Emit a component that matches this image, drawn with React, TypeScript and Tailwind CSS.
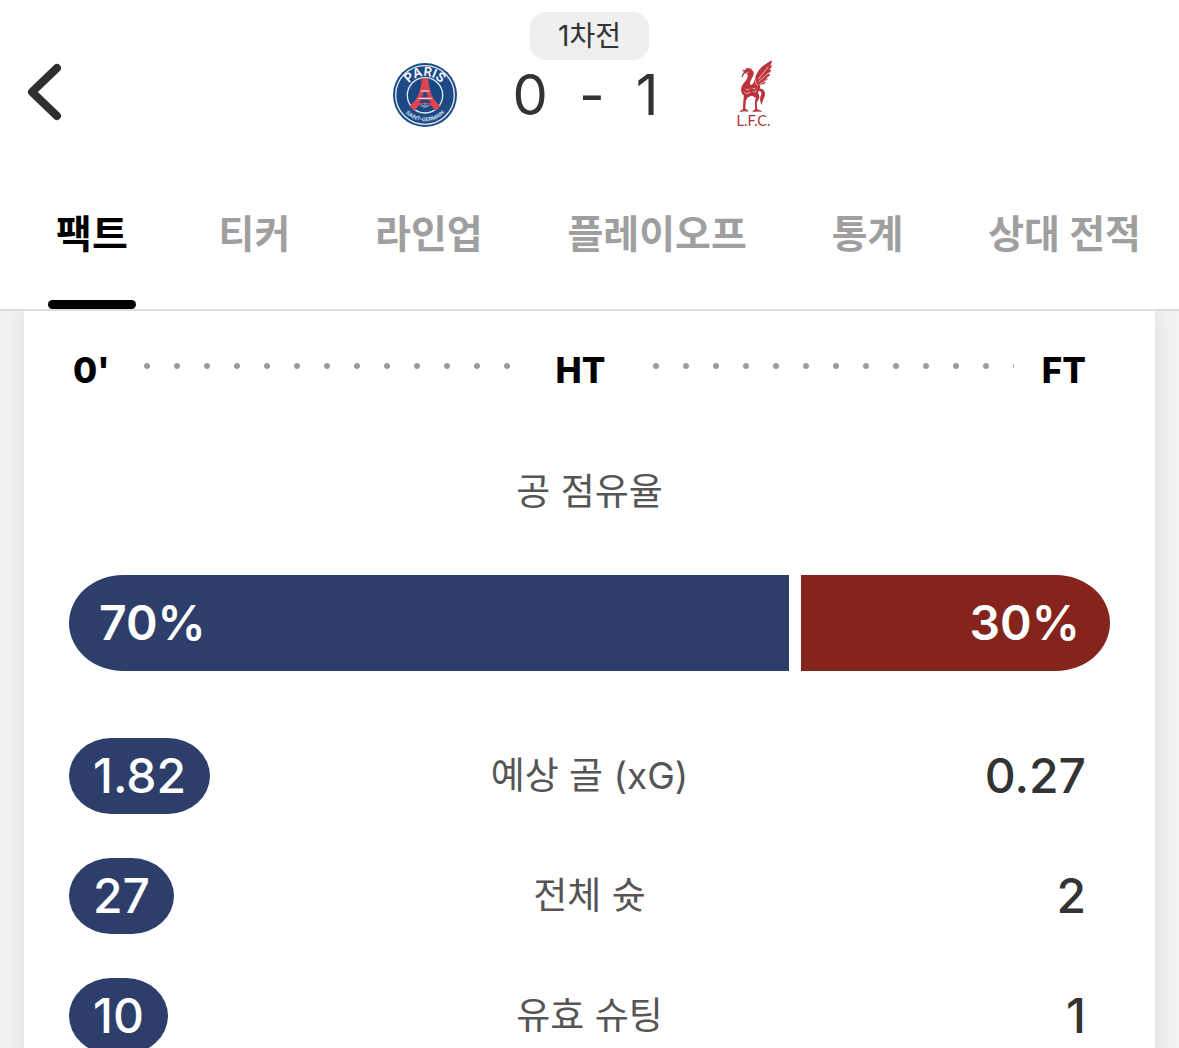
import React from "react";

const tabs = ["팩트", "티커", "라인업", "플레이오프", "통계", "상대 전적"];

const stats = [
  { label: "예상 골 (xG)", home: "1.82", away: "0.27" },
  { label: "전체 슛", home: "27", away: "2" },
  { label: "유효 슈팅", home: "10", away: "1" },
];

function ParisCrest() {
  return (
    <svg viewBox="0 0 192 192" className="size-16" role="img" aria-label="Paris Saint-Germain">
      <defs>
        <path id="crest-top" d="M36 97a60 58 0 0 1 120 0" />
        <path id="crest-bottom" d="M17 96a79 79 0 0 0 158 0" />
      </defs>
      <circle cx="96" cy="96" r="96" fill="#1d4a87" />
      <circle cx="96" cy="96" r="88" fill="none" stroke="#e3edf5" strokeWidth="4" />
      <circle cx="96" cy="97" r="53" fill="#174883" stroke="#e3edf5" strokeWidth="4" />
      <path
        d="M87 46h18l4 26c4 23 14 41 34 58l-18 13c-5-13-13-20-29-20s-24 7-29 20l-18-13c20-17 30-35 34-58z"
        fill="#dd4650"
      />
      <path d="M83 84h26M76 106h40" stroke="#e3edf5" strokeWidth="3" />
      <path d="M92 88h8l5 14H87zM84 110h24l6 10H78z" fill="#1d4a87" />
      <path d="M96 117c5 5 2 8 0 11 8-4 13-3 14 2-5 0-8 2-8 4H90c0-2-3-4-8-4 1-5 6-6 14-2-2-3-5-6 0-11z" fill="#8193a6" />
      <text fill="#fff" fontFamily="Inter" fontSize="38" fontWeight="600" textAnchor="middle">
        <textPath href="#crest-top" startOffset="50%">PARIS</textPath>
      </text>
      <text fill="#dce8f2" fontFamily="Inter" fontSize="16" fontWeight="600" textAnchor="middle">
        <textPath href="#crest-bottom" startOffset="50%">SAINT-GERMAIN</textPath>
      </text>
    </svg>
  );
}

function LiverpoolCrest() {
  return (
    <svg viewBox="12 16 112 206" className="h-[69px] w-[37px] overflow-visible" role="img" aria-label="Liverpool FC">
      <g fill="#bb343c">
        <path d="M29 60L33 51 38 47C33 47 31 44 33 41 36 40 38 42 41 42 39 38 42 35 45 38 48 34 52 35 53 38 58 36 61 39 59 42 65 44 67 50 65 56 62 65 54 77 54 83 55 87 59 88 62 85 68 78 68 66 73 57 81 38 97 24 121 12 120 20 118 25 114 29L121 27C120 35 116 39 111 42L119 41C116 49 112 53 106 55L116 54C113 61 108 65 101 67L110 68C106 73 101 76 95 77L102 80C98 85 92 86 85 86 86 96 84 104 78 109 82 116 84 121 82 128L75 140 76 161C82 162 88 164 91 169 84 167 80 167 76 168L61 168C63 164 67 162 70 161L69 139 72 126 60 120 48 124 42 134 40 160C45 161 48 163 49 168L38 167 22 169C24 165 29 162 33 161L34 137 36 120C29 113 26 105 28 96 30 83 44 77 47 62 48 56 46 52 42 52L37 53 33 60 31 66z" />
        <path d="M84 98C96 98 102 108 99 120 97 130 91 136 90 148 83 136 84 126 88 116 90 109 87 105 81 105z" />
      </g>
      <g fill="none" stroke="#fff" strokeWidth="2">
        <path d="M80 70c8-13 18-23 30-38M80 78c11-11 23-20 32-29M82 86c12-6 20-13 28-20M70 62c-2 12 1 20 8 28" />
        <path d="M40 98c4 6 10 6 14 0M38 109c6 5 12 5 17-1M62 96c3 5 8 4 11-1M63 107c4 3 8 1 12-4M44 49h5" />
      </g>
      <text x="65" y="211" fill="#b4303a" fontFamily="Lato" fontSize="44" textAnchor="middle">
        L.F.C.
      </text>
    </svg>
  );
}

/* One half of the match clock, a dot every 30px. */
function Dots({ className }: { className: string }) {
  return (
    <div
      aria-hidden="true"
      className={`${className} h-[30px] bg-[radial-gradient(circle,#9b9b9b_2.5px,transparent_3.5px)] bg-[length:30px_30px] bg-left-top bg-repeat-x`}
    />
  );
}

export default function App() {
  return (
    <div className="flex h-screen flex-col bg-[#f2f2f2] font-['Inter','Noto_Sans_CJK_KR',sans-serif] text-[#333]">
      <header className="relative z-10 shrink-0 border-b-2 border-[#dcdcdc] bg-white">
        <div className="grid h-[160px] grid-cols-[1fr_auto_1fr] pt-3">
          <button type="button" aria-label="뒤로" className="ml-6 mt-12 h-16 w-11 self-start">
            <svg viewBox="0 0 44 64" className="h-16 w-11" fill="none" stroke="#2f2f2f" strokeWidth="8" strokeLinecap="round" strokeLinejoin="round">
              <path d="M33 8 8 32l25 24" />
            </svg>
          </button>
          <div className="flex flex-col items-center">
            <span className="flex h-12 items-center rounded-2xl bg-[#efefef] px-7 text-[28px] leading-none">1차전</span>
            <div className="flex items-center">
              <ParisCrest />
              <div className="ml-14 mr-16 flex w-[146px] items-center justify-between text-[56px] leading-[70px]">
                <span>0</span>
                <span>-</span>
                <span>1</span>
              </div>
              <div className="flex size-16 items-center justify-center">
                <LiverpoolCrest />
              </div>
            </div>
          </div>
        </div>
        <nav className="flex h-[149px] justify-between pl-12 pr-[30px]">
          {tabs.map((tab, i) => (
            <button
              key={tab}
              type="button"
              aria-current={i === 0 ? "page" : undefined}
              className={
                i === 0
                  ? "mr-1.5 flex flex-col justify-between px-2 text-[39px] font-bold text-black"
                  : "flex flex-col justify-between px-2 text-[39px] font-bold text-[#9f9f9f]"
              }
            >
              <span className="whitespace-nowrap pt-11 leading-[60px]">{tab}</span>
              {i === 0 && <span className="-mx-2 h-[9px] self-stretch rounded-full bg-black" />}
            </button>
          ))}
        </nav>
      </header>

      <main className="min-h-0 flex-1 overflow-y-auto px-6 [scrollbar-width:none]">
        <section className="bg-white px-[45px] pb-11 pt-10 shadow-[0_0_24px_rgba(0,0,0,0.09)]">
          <div className="flex pl-1 pr-6 text-[35px] font-extrabold leading-[38px] text-black">
            <span className="mr-[22px]">0'</span>
            <Dots className="flex-[51]" />
            <span className="ml-11 mr-9">HT</span>
            <Dots className="flex-[50]" />
            <span className="ml-7">FT</span>
          </div>

          <h2 className="mt-[74px] text-center text-[37px] leading-[58px] text-[#555]">공 점유율</h2>

          <div className="mt-[54px] grid h-24 grid-cols-[7fr_3fr] gap-3 text-[48px] font-semibold text-white">
            <div className="flex items-center bg-[#2c3e69] pl-[30px] [border-radius:54px_0_0_54px/48px_0_0_48px]">70%</div>
            <div className="flex items-center justify-end bg-[#84241c] pr-[30px] [border-radius:0_54px_54px_0/0_48px_48px_0]">30%</div>
          </div>

          <ul className="mt-[67px] flex flex-col gap-11">
            {stats.map((s) => (
              <li key={s.label} className="grid h-[76px] grid-cols-[1fr_auto_1fr] items-center text-[48px] font-medium">
                <span className="flex h-full items-center justify-self-start bg-[#2c3e69] px-6 text-white [border-radius:42px/38px]">{s.home}</span>
                <span className="text-[37px] font-normal text-[#555]">{s.label}</span>
                <span className="justify-self-end pr-6">{s.away}</span>
              </li>
            ))}
          </ul>
        </section>
      </main>
    </div>
  );
}
